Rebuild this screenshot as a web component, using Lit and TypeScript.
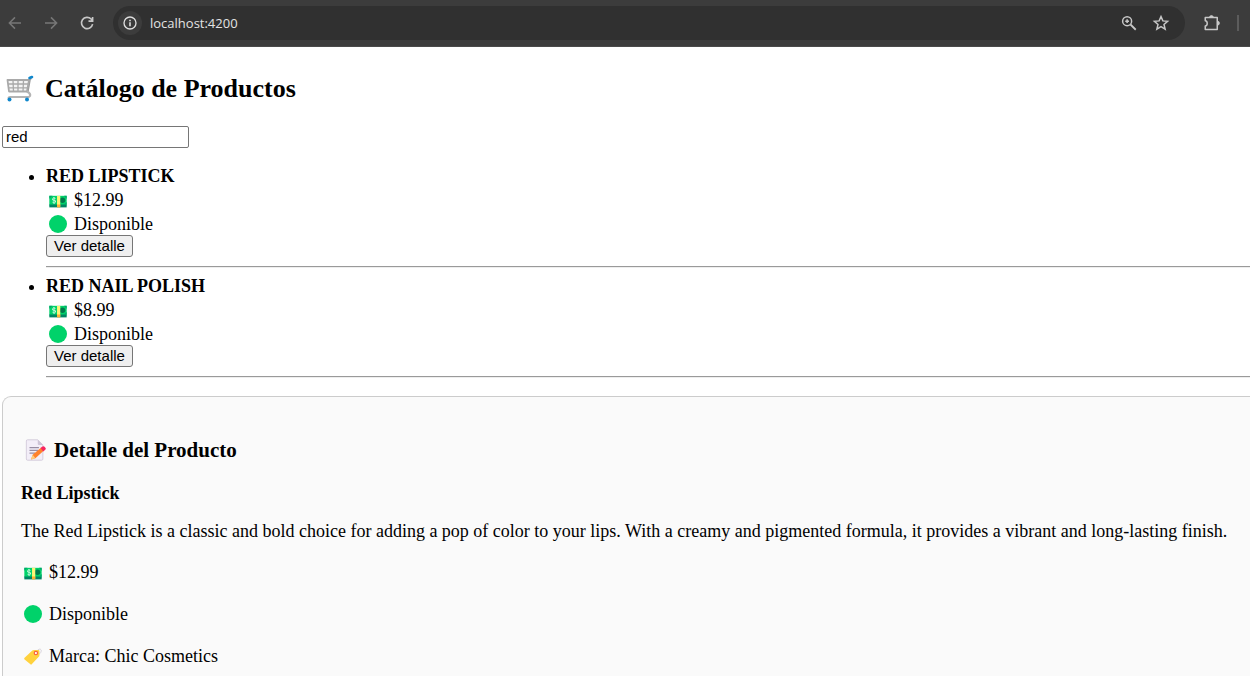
import { LitElement, html, css, svg } from "lit";
import { customElement, property, state } from "lit/decorators.js";

interface Product {
  name: string;
  price: string;
  brand: string;
  description: string;
}

const products: Product[] = [
  {
    name: "Red Lipstick",
    price: "$12.99",
    brand: "Chic Cosmetics",
    description:
      "The Red Lipstick is a classic and bold choice for adding a pop of color to your lips. With a creamy and pigmented formula, it provides a vibrant and long-lasting finish.",
  },
  {
    name: "Red Nail Polish",
    price: "$8.99",
    brand: "Nail Couture",
    description: "The Red Nail Polish offers a rich and glossy red hue for vibrant and polished nails.",
  },
];

const glyphs = {
  cart: svg`
    <path d="M25.500 3.500H24L21.500 17.500" fill="none" stroke="#9b9b9b" stroke-width="2"/>
    <path d="M1.500 5H23L21 16.500H3Z" fill="#f4f4f4" stroke="#a9a9a9" stroke-width="1.800" stroke-linejoin="round"/>
    <path d="M2 9H22.500M2.500 12.800H21.500M7 5.500L7.500 16.500M12 5.500V16.500M17.500 5.500L17 16.500" fill="none" stroke="#a9a9a9" stroke-width="1.300"/>
    <path d="M21 16.500Q25 18.500 24 21Q23 22.500 20 22H4Q2.500 22 2.500 23.500" fill="none" stroke="#b4b4b4" stroke-width="2.200"/>
    <path d="M23.500 3L26 2" stroke="#0f87cc" stroke-width="2.600" stroke-linecap="round"/>
    <circle cx="3.500" cy="24.500" r="2" fill="#0f87cc"/><circle cx="21" cy="24.500" r="2" fill="#0f87cc"/>`,
  money: svg`
    <path d="M.500 7.500h27v15H.500z" fill="#00d26a"/>
    <path d="M.500 21h27v4.500H.500z" fill="#008463"/>
    <circle cx="21" cy="14.500" r="4.300" fill="#007a4d"/>
    <path d="M.500 7.500h5L.500 12zM27.500 7.500v5l-4-5zM27.500 21v-4l-4 4z" fill="#00a66b"/>
    <path d="M12.500 7.500h5v17h-5z" fill="#fff478"/><path d="M12.500 21h5v4.500h-5z" fill="#ffb02e"/>
    <path d="M10 11.500Q6.500 9.500 5.500 12T8 14.500T10 17.500T5.500 17.500M7.800 9.500V19.500" fill="none" stroke="#c9f7df" stroke-width="1.500"/>`,
  green: svg`<circle cx="14" cy="14" r="14" fill="#00d26a"/>`,
  memo: svg`
    <path d="M3 2.500Q3 1 4.500 1H17.500L24 7.500V25.500Q24 27 22.500 27H4.500Q3 27 3 25.500Z" fill="#f3eef8" stroke="#cdc4d6"/>
    <path d="M17.500 1L24 7.500H19Q17.500 7.500 17.500 6Z" fill="#cdc4d6"/>
    <path d="M7 11H19M7 14.500H18M7 18H14" stroke="#998ea4" stroke-width="1.400"/>
    <path d="M9 26L11 20L21.500 11L25 15L14.500 24.500Z" fill="#ff822d"/>
    <path d="M9 26L11 20L14.500 24.500Z" fill="#ffce7c"/>
    <path d="M21 11.500L23 9.800Q25 8.500 27 10.800T26 14.500L24.500 15.800Z" fill="#f8255f"/>`,
  tag: svg`
    <path d="M20 8Q21 3 25 3Q28 4 26.500 8Q25 11.500 21 11" fill="none" stroke="#d5d0da" stroke-width="1.300"/>
    <path d="M.500 17L13 5.500Q14 4.500 15.500 4.500L22 4.500Q24 4.500 24 6.500V13Q24 14 23 15L12 27Q11 28 10 27L.500 19Q0 18 .500 17Z" fill="#ffd23e"/>
    <circle cx="18.500" cy="9.500" r="2.600" fill="#fff" stroke="#f9603d" stroke-width="1.800"/>`,
};

@customElement("emoji-icon")
class EmojiIcon extends LitElement {
  @property() name: keyof typeof glyphs = "green";

  static styles = css`
    :host {
      display: block;
      flex: none;
    }
    .glyph {
      display: block;
      width: 100%;
      height: 100%;
    }
  `;

  render() {
    return html`<svg class="glyph" viewBox="0 0 28 28" aria-hidden="true">${glyphs[this.name]}</svg>`;
  }
}

@customElement("browser-bar")
class BrowserBar extends LitElement {
  static styles = css`
    :host {
      display: flex;
      align-items: center;
      box-sizing: border-box;
      height: 47px;
      padding: 0 11px 0 6px;
      background: #3c3c3c;
      border-bottom: 1px solid #4a4a4a;
      color: #c7c7c7;
    }
    button {
      display: grid;
      place-items: center;
      padding: 0;
      border: 0;
      background: none;
      color: inherit;
    }
    svg {
      display: block;
      fill: none;
      stroke: currentColor;
      stroke-width: 2;
    }
    .nav {
      display: flex;
      gap: 18px;
    }
    .dim {
      color: #777;
    }
    .address {
      display: flex;
      align-items: center;
      flex: 1;
      height: 34px;
      margin-left: 17px;
      padding: 0 15px 0 5px;
      border-radius: 17px;
      background: #303030;
    }
    .info {
      width: 24px;
      height: 24px;
      border-radius: 50%;
      background: #3c3c3c;
      color: #dedede;
    }
    .url {
      flex: 1;
      min-width: 0;
      margin-left: 8px;
      padding: 0;
      border: 0;
      outline: 0;
      background: none;
      color: #e3e3e3;
      font: 13px/20px "Open Sans", sans-serif;
    }
    .tools {
      display: flex;
      gap: 14px;
    }
    .extensions {
      margin-left: 18px;
    }
    .divider {
      width: 2px;
      height: 16px;
      margin-left: 16px;
      background: #5c5c5c;
    }
  `;

  render() {
    return html`
      <nav class="nav" aria-label="Navegación">
        <button class="dim" aria-label="Atrás">
          <svg width="18" height="18" viewBox="0 0 24 24"><path d="M20 12H5M12 4.500L4.500 12L12 19.500" /></svg>
        </button>
        <button class="dim" aria-label="Adelante">
          <svg width="18" height="18" viewBox="0 0 24 24"><path d="M4 12H19M12 4.500L19.500 12L12 19.500" /></svg>
        </button>
        <button aria-label="Recargar">
          <svg width="18" height="18" viewBox="0 0 24 24"><path d="M19.500 13.500A7.500 7.500 0 1 1 17.500 6.700L19.500 9M19.500 4V9.500H14" stroke-width="2.200" /></svg>
        </button>
      </nav>
      <div class="address">
        <button class="info" aria-label="Información del sitio">
          <svg width="16" height="16" viewBox="0 0 24 24"><circle cx="12" cy="12" r="9" /><path d="M12 11V17M12 7V9.200" stroke-width="2.400" /></svg>
        </button>
        <input class="url" aria-label="Dirección" value="localhost:4200" />
        <div class="tools">
          <button aria-label="Zoom">
            <svg width="18" height="18" viewBox="0 0 24 24"><circle cx="9.500" cy="9.500" r="6" /><path d="M14 14L21 21" stroke-width="2.400" /><path d="M9.500 7V12M7 9.500H12" /></svg>
          </button>
          <button aria-label="Añadir a favoritos">
            <svg width="18" height="18" viewBox="0 0 24 24"><path d="M12 3.500L14.500 9.200L20.800 9.800L16 14L17.500 20.200L12 16.900L6.500 20.200L8 14L3.200 9.800L9.500 9.200Z" /></svg>
          </button>
        </div>
      </div>
      <button class="extensions" aria-label="Extensiones">
        <svg width="18" height="18" viewBox="0 0 24 24"><path d="M3 4.500H19V20.500H3V16C6.500 15.500 6.500 9.500 3 9Z" stroke-linejoin="round" /><path d="M9 4V3Q11 1 13.500 3V4ZM20 10H21Q23 12 21 14.500H20Z" fill="currentColor" stroke-width="1" /></svg>
      </button>
      <span class="divider"></span>
    `;
  }
}

@customElement("app-root")
class AppRoot extends LitElement {
  @state() private query = "red";
  @state() private selected: Product = products[0];

  static styles = css`
    :host {
      display: block;
      height: 100vh;
      overflow: hidden;
      background: #fff;
      color: #000;
      font: 18px/20px "Liberation Serif", "Times New Roman", serif;
    }
    .page {
      padding: 26px 0 0 2px;
    }
    h2,
    h3,
    p {
      margin: 0;
    }
    .title {
      display: flex;
      align-items: center;
      gap: 11px;
      padding-left: 4px;
      font-size: 26px;
      line-height: 32px;
    }
    .title-icon {
      width: 28px;
      height: 28px;
    }
    .search {
      display: block;
      box-sizing: border-box;
      width: 187px;
      height: 22px;
      margin-top: 21px;
      padding: 0 3px 2px;
      border: 1px solid #767676;
      border-radius: 2px;
      background: #fff;
      color: #000;
      font: 15px/18px "Liberation Sans", Arial, sans-serif;
    }
    .list {
      margin: 16px 0 0;
      padding: 0 0 0 44px;
    }
    .name {
      display: block;
      line-height: 24px;
      text-transform: uppercase;
    }
    .row {
      display: flex;
      align-items: center;
      gap: 7px;
      padding-left: 3px;
      line-height: 24px;
    }
    .row-icon {
      width: 18px;
      height: 18px;
    }
    .more {
      display: block;
      box-sizing: border-box;
      height: 22px;
      margin-top: -1px;
      padding: 0 7px;
      border: 1px solid #767676;
      border-radius: 3px;
      background: #efefef;
      color: #000;
      font: 15px/18px "Liberation Sans", Arial, sans-serif;
    }
    .rule {
      margin: 9px 0 6px;
      border: 0;
      border-top: 1px solid #9a9a9a;
      border-bottom: 1px solid #eee;
    }
    .detail {
      margin-top: 18px;
      padding: 41px 18px 18px;
      border: 1px solid #ccc;
      border-right: 0;
      border-radius: 9px 0 0 9px;
      background: #fafafa;
    }
    .detail-title {
      display: flex;
      align-items: center;
      gap: 8px;
      padding-left: 3px;
      font-size: 21px;
      line-height: 24px;
    }
    .detail-icon {
      width: 22px;
      height: 22px;
    }
    .detail-name {
      margin-top: 21px;
    }
    .description {
      margin: 18px 0 19px;
    }
    .fact {
      margin-top: 18px;
    }
  `;

  private renderProduct(product: Product) {
    return html`
      <li>
        <strong class="name">${product.name}</strong>
        <div class="row"><emoji-icon class="row-icon" name="money"></emoji-icon>${product.price}</div>
        <div class="row"><emoji-icon class="row-icon" name="green"></emoji-icon>Disponible</div>
        <button class="more" @click=${() => (this.selected = product)}>Ver detalle</button>
        <hr class="rule" />
      </li>
    `;
  }

  render() {
    const query = this.query.toLowerCase();
    const matches = products.filter((p) => p.name.toLowerCase().includes(query));
    return html`
      <browser-bar></browser-bar>
      <main class="page">
        <h2 class="title"><emoji-icon class="title-icon" name="cart"></emoji-icon>Catálogo de Productos</h2>
        <input
          class="search"
          type="text"
          aria-label="Buscar producto"
          .value=${this.query}
          @input=${(e: Event) => (this.query = (e.target as HTMLInputElement).value)}
        />
        <ul class="list">
          ${matches.map((p) => this.renderProduct(p))}
        </ul>
        <section class="detail">
          <h3 class="detail-title"><emoji-icon class="detail-icon" name="memo"></emoji-icon>Detalle del Producto</h3>
          <p class="detail-name"><strong>${this.selected.name}</strong></p>
          <p class="description">${this.selected.description}</p>
          <p class="row fact"><emoji-icon class="row-icon" name="money"></emoji-icon>${this.selected.price}</p>
          <p class="row fact"><emoji-icon class="row-icon" name="green"></emoji-icon>Disponible</p>
          <p class="row fact"><emoji-icon class="row-icon" name="tag"></emoji-icon>Marca: ${this.selected.brand}</p>
        </section>
      </main>
    `;
  }
}
